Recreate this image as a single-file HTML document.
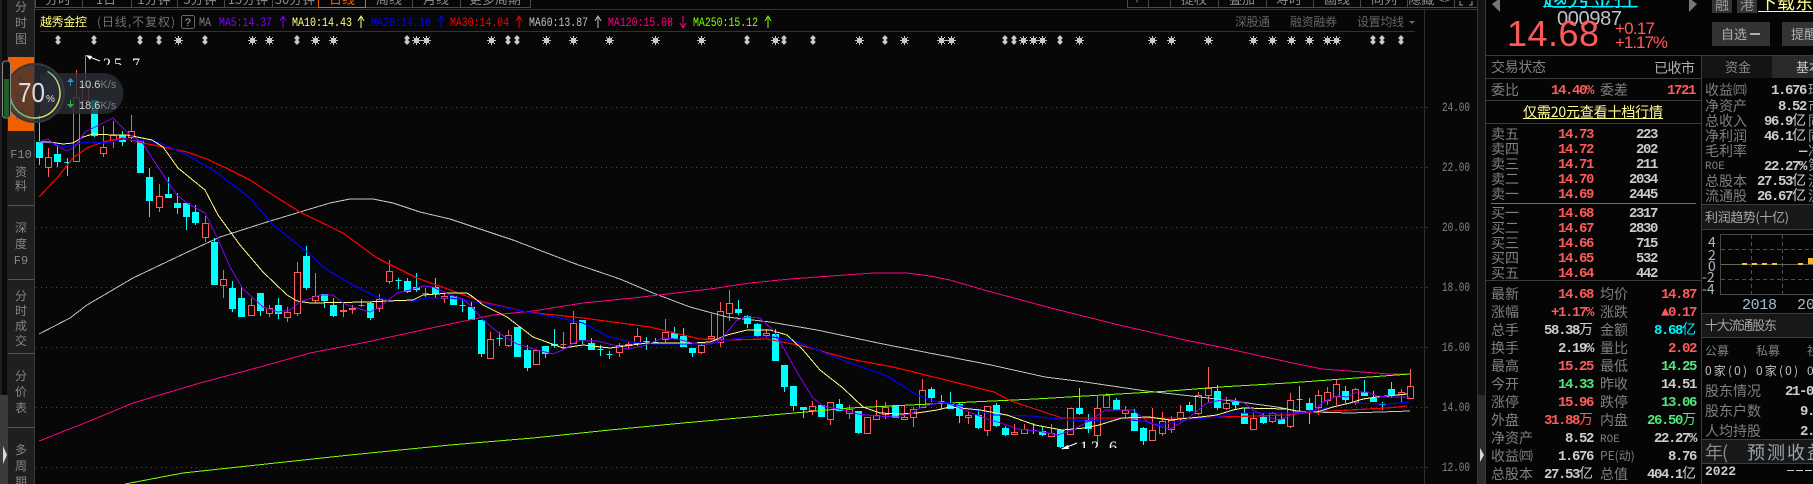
<!DOCTYPE html>
<html><head><meta charset="utf-8"><title>越秀金控</title>
<style>
html,body{margin:0;padding:0;background:#070707;overflow:hidden}
svg{display:block}
text{font-family:"WenQuanYi Zen Hei","Noto Sans CJK SC","Liberation Sans",sans-serif}
.tab{font-size:12px;fill:#858585;text-anchor:middle}
.top{font-size:13px;fill:#8a8a8a;text-anchor:middle}
.ma{font-family:"Liberation Mono",monospace;font-size:13px}
.ax{font-family:"Liberation Mono",monospace;font-size:13px;fill:#858585}
.l{font-size:14px;fill:#808080}
.v{font-family:"Liberation Mono",monospace;font-weight:bold;font-size:14px;letter-spacing:-1.4px;text-anchor:end}
.c{font-family:"WenQuanYi Zen Hei","Noto Sans CJK SC",sans-serif;font-weight:normal;letter-spacing:0}
.r{fill:#ff5a5a}.g{fill:#50e878}.w{fill:#cdcdcd}.cy{fill:#00f0ff}
</style></head>
<body>
<svg width="1813" height="484" viewBox="0 0 1813 484" xmlns="http://www.w3.org/2000/svg">
<defs>
<g id="s" fill="#c8c8c8" shape-rendering="crispEdges"><path d="M-2-2h5v5h-5z"/><path d="M0-4h1v9h-1zM-4 0h9v1h-9zM-3-3h1v1h-1zM3-3h1v1h-1zM-3 3h1v1h-1zM3 3h1v1h-1z"/></g>
<path id="d" fill="#c8c8c8" d="M-.6-4.500h1.200l1.900 2.300v1l-1.200.7v1l1.200.7v1l-1.900 2.300h-1.200l-1.900-2.300v-1l1.200-.7v-1l-1.200-.7v-1z"/>
<linearGradient id="ring" x1="0" y1="0" x2="0" y2="1"><stop offset="0" stop-color="#28c8a8"/><stop offset=".55" stop-color="#70c878"/><stop offset="1" stop-color="#e8e060"/></linearGradient>
</defs>
<rect width="1813" height="484" fill="#070707"/>

<!-- left strip -->
<rect x="0" y="0" width="8" height="484" fill="#1d1d1d"/>
<rect x="2" y="0" width="5" height="395" fill="#0a0a0a"/>
<rect x="0" y="395" width="8" height="89" fill="#3b3b3b"/>
<path d="M3 446l4 9-4 9z" fill="#d8d8d8"/>
<!-- side tabs -->
<rect x="8" y="0" width="26" height="484" fill="#1f1f1f"/>
<rect x="8" y="57" width="26" height="74" fill="#f05f00"/>
<path d="M8 205.500h26M8 279.500h26M8 353.500h26M8 427.500h26" stroke="#555" shape-rendering="crispEdges"/>
<rect x="34" y="0" width="1" height="484" fill="#3c3c3c"/>
<text class="tab" x="21" y="11">分</text><text class="tab" x="21" y="27">时</text><text class="tab" x="21" y="43">图</text>
<text class="tab" x="21" y="84" style="fill:#a05020">K</text><text class="tab" x="21" y="101" style="fill:#a05020">线</text><text class="tab" x="21" y="118" style="fill:#a05020">图</text>
<text class="tab" x="21" y="158" style="font-family:'Liberation Mono',monospace">F10</text><text class="tab" x="21" y="176">资</text><text class="tab" x="21" y="190">料</text>
<text class="tab" x="21" y="232">深</text><text class="tab" x="21" y="248">度</text><text class="tab" x="21" y="264" style="font-family:'Liberation Mono',monospace">F9</text>
<text class="tab" x="21" y="300">分</text><text class="tab" x="21" y="315">时</text><text class="tab" x="21" y="330">成</text><text class="tab" x="21" y="345">交</text>
<text class="tab" x="21" y="380">分</text><text class="tab" x="21" y="396">价</text><text class="tab" x="21" y="412">表</text>
<text class="tab" x="21" y="454">多</text><text class="tab" x="21" y="470">周</text><text class="tab" x="21" y="486">期</text>

<!-- top tabs -->
<g fill="none" stroke="#4a4a4a" shape-rendering="crispEdges">
<path d="M35.500 0V7.500H530.500V0M82.500 0V7M131.500 0V7M177.500 0V7M224.500 0V7M272.500 0V7M412.500 0V7M460.500 0V7"/>
<path d="M1127.500 0V7.500H1477.500V0M1148.500 0V7M1170.500 0V7M1218.500 0V7M1266.500 0V7M1313.500 0V7M1360.500 0V7M1407.500 0V7M1454.500 0V7"/>
<path d="M318.500 0V7.500H365.500V0" stroke="#f06000"/>
</g>
<text class="top" x="58" y="4">分时</text><text class="top" x="106" y="4">1日</text><text class="top" x="154" y="4">1分钟</text><text class="top" x="200" y="4">5分钟</text><text class="top" x="248" y="4">15分钟</text><text class="top" x="295" y="4">30分钟</text><text class="top" x="342" y="4" style="fill:#f06000">日线</text><text class="top" x="389" y="4">周线</text><text class="top" x="436" y="4">月线</text><text class="top" x="495" y="4">更多周期</text>
<text class="top" x="1137" y="4">+</text><text class="top" x="1194" y="4">提权</text><text class="top" x="1242" y="4">叠加</text><text class="top" x="1289" y="4">寿时</text><text class="top" x="1337" y="4">画线</text><text class="top" x="1384" y="4">同列</text><text class="top" x="1430" y="4">隐藏 &lt;&gt;</text>
<path d="M1460 1v4h3M1472 1v4h-3" stroke="#999" fill="none"/>

<!-- header row -->
<path d="M35 9.500H1477M40 31.500H1415" stroke="#333" shape-rendering="crispEdges"/>
<text x="40" y="26" style="font-size:12px;fill:#ffff80" textLength="47">越秀金控</text>
<text x="97" y="26" style="font-size:12px;fill:#707070" textLength="78">(日线,不复权)</text>
<rect x="181.500" y="15.500" width="13" height="13" rx="2" fill="none" stroke="#666"/>
<text x="188" y="26" style="font-size:11px;fill:#aaa;text-anchor:middle;font-family:'Liberation Mono'">?</text>
<text class="ma" x="199" y="26" fill="#808080" textLength="12" lengthAdjust="spacingAndGlyphs">MA</text>
<text class="ma" x="219" y="26" fill="#8000ff" textLength="53" lengthAdjust="spacingAndGlyphs">MA5:14.37</text>
<text class="ma" x="292" y="26" fill="#ffff80" textLength="60" lengthAdjust="spacingAndGlyphs">MA10:14.43</text>
<text class="ma" x="371" y="26" fill="#0000ff" textLength="60" lengthAdjust="spacingAndGlyphs">MA20:14.16</text>
<text class="ma" x="450" y="26" fill="#ff0000" textLength="59" lengthAdjust="spacingAndGlyphs">MA30:14.04</text>
<text class="ma" x="529" y="26" fill="#c0c0c0" textLength="59" lengthAdjust="spacingAndGlyphs">MA60:13.87</text>
<text class="ma" x="608" y="26" fill="#ff0080" textLength="65" lengthAdjust="spacingAndGlyphs">MA120:15.08</text>
<text class="ma" x="693" y="26" fill="#80ff00" textLength="65" lengthAdjust="spacingAndGlyphs">MA250:15.12</text>
<g fill="none" shape-rendering="crispEdges">
<path d="M283 28V16m-3 5l3-5 3 5" stroke="#8000ff"/>
<path d="M361 28V16m-3 5l3-5 3 5" stroke="#ffff80"/>
<path d="M441 28V16m-3 5l3-5 3 5" stroke="#0000ff"/>
<path d="M519 28V16m-3 5l3-5 3 5" stroke="#ff0000"/>
<path d="M598 28V16m-3 5l3-5 3 5" stroke="#c0c0c0"/>
<path d="M683 16V28m-3-5l3 5 3-5" stroke="#ff0080"/>
<path d="M768 28V16m-3 5l3-5 3 5" stroke="#80ff00"/>
</g>
<text x="1235" y="26" style="font-size:12px;fill:#666" textLength="35">深股通</text>
<text x="1290" y="26" style="font-size:12px;fill:#666" textLength="47">融资融券</text>
<text x="1357" y="26" style="font-size:12px;fill:#666" textLength="47">设置均线</text>
<path d="M1409 21h6l-3 3z" fill="#666"/>

<!-- marks row -->
<g>
<use href="#d" x="58" y="40"/><use href="#d" x="94" y="40"/><use href="#d" x="140" y="40"/><use href="#d" x="159" y="40"/><use href="#s" x="178" y="40"/><use href="#d" x="205" y="40"/><use href="#s" x="252" y="40"/><use href="#s" x="269" y="40"/><use href="#d" x="297" y="40"/><use href="#s" x="315" y="40"/><use href="#s" x="333" y="40"/><use href="#d" x="407" y="40"/><use href="#s" x="416" y="40"/><path d="M416 40.500h10" stroke="#c8c8c8"/><use href="#s" x="426" y="40"/>
<use href="#s" x="491" y="40"/><use href="#d" x="508" y="40"/><use href="#d" x="517" y="40"/><use href="#s" x="546" y="40"/><use href="#s" x="573" y="40"/><use href="#s" x="609" y="40"/><use href="#s" x="655" y="40"/><use href="#s" x="701" y="40"/><use href="#d" x="747" y="40"/><use href="#s" x="775" y="40"/><use href="#d" x="784" y="40"/><use href="#d" x="813" y="40"/><use href="#s" x="859" y="40"/><use href="#d" x="885" y="40"/><use href="#s" x="904" y="40"/><use href="#s" x="941" y="40"/><path d="M941 40.500h10" stroke="#c8c8c8"/><use href="#s" x="951" y="40"/>
<use href="#d" x="1005" y="40"/><use href="#d" x="1014" y="40"/><use href="#s" x="1023" y="40"/><use href="#s" x="1033" y="40"/><path d="M1033 40.500h9" stroke="#c8c8c8"/><use href="#s" x="1042" y="40"/><use href="#d" x="1060" y="40"/><use href="#s" x="1079" y="40"/><use href="#s" x="1152" y="40"/><use href="#s" x="1171" y="40"/><use href="#s" x="1208" y="40"/><use href="#s" x="1253" y="40"/><use href="#s" x="1272" y="40"/><use href="#s" x="1291" y="40"/><use href="#s" x="1309" y="40"/><use href="#s" x="1327" y="40"/><path d="M1327 40.500h9" stroke="#c8c8c8"/><use href="#s" x="1336" y="40"/><use href="#d" x="1373" y="40"/><use href="#d" x="1382" y="40"/><use href="#d" x="1401" y="40"/>
</g>

<!-- grid -->
<path d="M36 107.500H1425M36 167.500H1425M36 227.500H1425M36 287.500H1425M36 347.500H1425M36 407.500H1425M36 467.500H1425" stroke="#4a4a4a" stroke-dasharray="1 4" shape-rendering="crispEdges"/>
<path d="M1424.500 10V484M1425 107.500h3M1425 167.500h3M1425 227.500h3M1425 287.500h3M1425 347.500h3M1425 407.500h3M1425 467.500h3" stroke="#2e2e2e" shape-rendering="crispEdges"/>
<text class="ax" x="1442" y="111" textLength="28" lengthAdjust="spacingAndGlyphs">24.00</text>
<text class="ax" x="1442" y="171" textLength="28" lengthAdjust="spacingAndGlyphs">22.00</text>
<text class="ax" x="1442" y="231" textLength="28" lengthAdjust="spacingAndGlyphs">20.00</text>
<text class="ax" x="1442" y="291" textLength="28" lengthAdjust="spacingAndGlyphs">18.00</text>
<text class="ax" x="1442" y="351" textLength="28" lengthAdjust="spacingAndGlyphs">16.00</text>
<text class="ax" x="1442" y="411" textLength="28" lengthAdjust="spacingAndGlyphs">14.00</text>
<text class="ax" x="1442" y="471" textLength="28" lengthAdjust="spacingAndGlyphs">12.00</text>

<!-- candles -->
<g shape-rendering="crispEdges" stroke-width="1">
<path fill="none" stroke="#ff5a5a" d="M48.500 148V177M76.500 70V162M85.500 55V100M103.500 126V157M113.500 121V148M131.500 115V142M159.500 184V212M205.500 216V242M223.500 270V298M251.500 298V316M269.500 305V317M287.500 307V322M297.500 262V316M315.500 273V303M343.500 302V317M352.500 305V314M361.500 299V307M379.500 294V312M389.500 260V284M425.500 288V297M444.500 292V303M490.500 332V358M508.500 330V347M536.500 350V364M563.500 332V348M573.500 311V344M619.500 343V357M628.500 341V349M637.500 328V346M665.500 319V343M701.500 343V354M711.500 314V340M720.500 302V347M729.500 290V321M766.500 329V338M812.500 401V415M830.500 402V425M849.500 405V419M867.500 417V433M876.500 400V420M885.500 402V419M904.500 406V419M913.500 407V427M922.500 379V407M968.500 411V424M987.500 406V436M1014.500 424V434M1024.500 424V434M1051.500 424V436M1070.500 408V435M1097.500 396V443M1106.500 393V407M1125.500 406V418M1152.500 408V440M1162.500 412V436M1171.500 416V433M1180.500 405V421M1198.500 392V415M1208.500 367V402M1226.500 397V410M1253.500 412V429M1272.500 412V423M1290.500 393V428M1318.500 390V415M1327.500 387V405M1336.500 379V405M1355.500 388V405M1401.500 389V403M1410.500 369V399"/>
<path fill="#070707" stroke="#ff5a5a" d="M45.500 157.500h6V167.500h-6zM73.500 97.500h6V161.500h-6zM82.500 85.500h6V100.500h-6zM100.500 147.500h6V153.500h-6zM110.500 135.500h6V140.500h-6zM128.500 131.500h6V137.500h-6zM156.500 196.500h6V207.500h-6zM202.500 223.500h6V237.500h-6zM220.500 279.500h6V285.500h-6zM248.500 305.500h6V315.500h-6zM266.500 308.500h6V313.500h-6zM284.500 312.500h6V317.500h-6zM294.500 272.500h6V313.500h-6zM312.500 296.500h6V300.500h-6zM340.500 310.500h6V311.500h-6zM349.500 308.500h6V309.500h-6zM358.500 305.500h6V305.500h-6zM376.500 299.500h6V308.500h-6zM386.500 271.500h6V281.500h-6zM422.500 293.500h6V293.500h-6zM441.500 296.500h6V298.500h-6zM487.500 339.500h6V358.500h-6zM505.500 335.500h6V345.500h-6zM533.500 350.500h6V364.500h-6zM560.500 344.500h6V344.500h-6zM570.500 323.500h6V343.500h-6zM616.500 345.500h6V352.500h-6zM625.500 344.500h6V345.500h-6zM634.500 336.500h6V343.500h-6zM662.500 332.500h6V339.500h-6zM698.500 345.500h6V352.500h-6zM708.500 336.500h6V338.500h-6zM717.500 311.500h6V342.500h-6zM726.500 303.500h6V313.500h-6zM763.500 333.500h6V335.500h-6zM809.500 406.500h6V410.500h-6zM827.500 402.500h6V419.500h-6zM846.500 409.500h6V413.500h-6zM864.500 417.500h6V433.500h-6zM873.500 415.500h6V419.500h-6zM882.500 407.500h6V414.500h-6zM901.500 417.500h6V419.500h-6zM910.500 409.500h6V417.500h-6zM919.500 390.500h6V407.500h-6zM965.500 415.500h6V417.500h-6zM984.500 406.500h6V430.500h-6zM1011.500 432.500h6V434.500h-6zM1021.500 429.500h6V433.500h-6zM1048.500 433.500h6V436.500h-6zM1067.500 408.500h6V434.500h-6zM1094.500 408.500h6V435.500h-6zM1103.500 395.500h6V407.500h-6zM1122.500 410.500h6V413.500h-6zM1149.500 430.500h6V440.500h-6zM1159.500 421.500h6V433.500h-6zM1168.500 420.500h6V429.500h-6zM1177.500 412.500h6V418.500h-6zM1195.500 395.500h6V413.500h-6zM1205.500 388.500h6V395.500h-6zM1223.500 403.500h6V408.500h-6zM1250.500 418.500h6V429.500h-6zM1269.500 413.500h6V421.500h-6zM1287.500 400.500h6V426.500h-6zM1315.500 395.500h6V407.500h-6zM1324.500 392.500h6V400.500h-6zM1333.500 384.500h6V396.500h-6zM1352.500 389.500h6V402.500h-6zM1398.500 392.500h6V394.500h-6zM1407.500 386.500h6V398.500h-6z"/>
<path fill="#00ffff" stroke="#00ffff" d="M39.500 115V165M36.500 142.500h6V157.500h-6zM57.500 145V167M54.500 154.500h6V161.500h-6zM67.500 158V176M64.500 162.500h6V162.500h-6zM94.500 100V137M91.500 100.500h6V135.500h-6zM122.500 131V146M119.500 135.500h6V141.500h-6zM140.500 140V172M137.500 140.500h6V172.500h-6zM149.500 168V217M146.500 177.500h6V200.500h-6zM168.500 177V197M165.500 194.500h6V197.500h-6zM177.500 193V214M174.500 203.500h6V207.500h-6zM186.500 203V230M183.500 203.500h6V216.500h-6zM195.500 205V225M192.500 212.500h6V222.500h-6zM214.500 238V284M211.500 242.500h6V284.500h-6zM232.500 281V312M229.500 288.500h6V308.500h-6zM241.500 287V317M238.500 298.500h6V316.500h-6zM260.500 293V316M257.500 293.500h6V310.500h-6zM278.500 298V319M275.500 305.500h6V313.500h-6zM306.500 246V290M303.500 256.500h6V287.500h-6zM324.500 294V308M321.500 294.500h6V300.500h-6zM333.500 298V317M330.500 305.500h6V315.500h-6zM370.500 302V320M367.500 303.500h6V317.500h-6zM398.500 278V289M395.500 280.500h6V280.500h-6zM407.500 278V293M404.500 281.500h6V291.500h-6zM416.500 273V292M413.500 287.500h6V289.500h-6zM435.500 278V298M432.500 287.500h6V293.500h-6zM453.500 296V305M450.500 296.500h6V304.500h-6zM462.500 299V312M459.500 305.500h6V305.500h-6zM471.500 302V319M468.500 307.500h6V319.500h-6zM481.500 320V357M478.500 320.500h6V353.500h-6zM499.500 332V346M496.500 338.500h6V338.500h-6zM517.500 327V357M514.500 327.500h6V356.500h-6zM527.500 345V371M524.500 350.500h6V367.500h-6zM545.500 346V358M542.500 346.500h6V353.500h-6zM554.500 329V348M551.500 344.500h6V345.500h-6zM582.500 320V344M579.500 320.500h6V339.500h-6zM591.500 338V350M588.500 343.500h6V349.500h-6zM600.500 345V356M597.500 349.500h6V349.500h-6zM609.500 351V359M606.500 354.500h6V354.500h-6zM646.500 337V350M643.500 341.500h6V341.500h-6zM655.500 338V344M652.500 342.500h6V342.500h-6zM674.500 327V339M671.500 333.500h6V338.500h-6zM683.500 328V346M680.500 336.500h6V346.500h-6zM692.500 348V357M689.500 348.500h6V352.500h-6zM738.500 300V315M735.500 309.500h6V312.500h-6zM747.500 315V328M744.500 316.500h6V323.500h-6zM757.500 323V337M754.500 324.500h6V335.500h-6zM775.500 329V361M772.500 334.500h6V360.500h-6zM784.500 365V392M781.500 365.500h6V386.500h-6zM793.500 386V411M790.500 386.500h6V405.500h-6zM803.500 407V418M800.500 407.500h6V409.500h-6zM821.500 405V417M818.500 405.500h6V416.500h-6zM839.500 399V411M836.500 404.500h6V410.500h-6zM858.500 411V434M855.500 411.500h6V432.500h-6zM895.500 405V418M892.500 405.500h6V417.500h-6zM931.500 387V402M928.500 389.500h6V397.500h-6zM941.500 395V409M938.500 401.500h6V401.500h-6zM950.500 392V408M947.500 403.500h6V408.500h-6zM959.500 403V423M956.500 404.500h6V415.500h-6zM978.500 409V429M975.500 415.500h6V427.500h-6zM996.500 403V427M993.500 405.500h6V425.500h-6zM1005.500 426V436M1002.500 428.500h6V434.500h-6zM1033.500 423V434M1030.500 430.500h6V430.500h-6zM1042.500 426V436M1039.500 431.500h6V434.500h-6zM1060.500 430V448M1057.500 430.500h6V446.500h-6zM1079.500 388V415M1076.500 408.500h6V413.500h-6zM1088.500 414V433M1085.500 420.500h6V428.500h-6zM1116.500 398V409M1113.500 400.500h6V409.500h-6zM1134.500 409V431M1131.500 413.500h6V430.500h-6zM1143.500 427V445M1140.500 428.500h6V440.500h-6zM1189.500 402V412M1186.500 405.500h6V410.500h-6zM1217.500 385V410M1214.500 391.500h6V407.500h-6zM1235.500 398V410M1232.500 402.500h6V404.500h-6zM1244.500 408V423M1241.500 413.500h6V423.500h-6zM1263.500 413V424M1260.500 417.500h6V422.500h-6zM1281.500 413V424M1278.500 419.500h6V423.500h-6zM1299.500 386V413M1296.500 399.500h6V399.500h-6zM1309.500 398V424M1306.500 403.500h6V409.500h-6zM1345.500 386V403M1342.500 391.500h6V399.500h-6zM1364.500 380V396M1361.500 392.500h6V395.500h-6zM1373.500 391V402M1370.500 398.500h6V401.500h-6zM1382.500 402V410M1379.500 404.500h6V404.500h-6zM1391.500 382V398M1388.500 389.500h6V394.500h-6z"/>
</g>

<!-- MA lines -->
<g fill="none" shape-rendering="crispEdges">
<polyline stroke="#c4c4c4" points="39,334 70,318 87,305 133,278 177,257 220,237 267,222 300,212 330,203 350,199 373,199 393,203 420,212 450,219 513,240 573,263 620,279 653,293 690,307 727,317 770,322 817,330 883,344 950,357 991,365 1045,377 1085,382 1146,391 1200,397 1240,402 1277,407 1297,411 1313,412 1350,413 1410,411"/>
<polyline stroke="#ff0080" points="39,441 67,430 97,418 133,403 200,383 260,367 310,353 367,342 450,324 493,315 533,311 583,303 633,298 710,289 750,283 790,279 817,277 845,275 873,273 907,273 930,276 950,280 984,290 1051,308 1119,325 1185,340 1220,347 1288,362 1322,369 1389,374 1410,374"/>
<polyline stroke="#80ff00" points="125,484 183,473 257,465 350,455 450,445 533,438 610,430 683,423 783,414 850,408 950,403 1035,399 1102,395 1170,391 1220,387 1288,383 1356,378 1410,374"/>
<polyline stroke="#ff0000" stroke-width="1.200" points="39,197 57,178 73,158 87,148 103,142 123,138 143,143 163,147 187,152 207,159 230,170 250,180 273,195 300,212 343,233 377,258 417,278 450,290 483,302 527,312 583,318 650,327 700,339 727,340 767,339 803,346 850,359 893,367 950,381 994,392 1011,401 1062,418 1119,418 1187,418 1287,415 1313,412 1350,410 1387,408 1407,406"/>
<polyline stroke="#0000ff" stroke-width="1.200" points="39,142 48,143 67,147 80,143 90,142 107,143 123,139 137,140 160,143 183,153 213,170 250,198 273,225 307,252 327,270 353,285 377,297 393,301 413,301 427,298 450,298 483,303 527,312 560,318 583,323 607,336 630,342 657,344 710,344 727,340 747,337 773,337 797,342 817,350 850,363 887,376 917,395 937,402 950,403 994,415 1031,416 1058,419 1085,421 1119,419 1143,421 1160,425 1187,420 1217,417 1234,413 1263,413 1300,413 1327,408 1350,403 1387,404 1410,402"/>
<polyline stroke="#ffff80" points="39,142 50,142 63,144 73,143 83,137 93,134 113,135 127,135 137,137 152,140 163,147 178,168 205,190 218,215 240,245 263,272 287,295 297,301 310,303 367,302 387,301 413,300 423,295 450,293 467,293 473,297 483,305 507,317 533,337 563,348 583,345 610,348 647,343 693,343 710,342 727,335 747,330 770,330 787,335 803,350 820,370 843,388 863,407 880,413 900,414 917,413 937,410 950,407 980,410 1007,415 1035,425 1062,430 1085,428 1099,425 1122,418 1149,417 1170,420 1200,417 1217,415 1233,410 1243,408 1287,409 1300,412 1317,412 1333,407 1350,403 1363,399 1377,397 1407,394"/>
<polyline stroke="#8000ff" points="39,142 48,139 57,146 67,151 75,147 85,132 95,127 113,118 130,135 142,142 152,158 168,182 177,195 187,203 205,213 217,237 230,267 243,289 263,307 278,312 290,310 300,302 320,295 333,295 343,303 353,307 370,312 380,307 397,293 410,290 423,286 433,287 450,295 463,299 473,308 483,320 500,334 517,344 530,348 553,354 563,350 577,341 597,341 613,345 627,349 643,346 663,338 677,339 693,343 710,344 723,337 737,320 747,317 760,318 773,330 783,347 793,365 803,382 813,398 823,406 843,410 858,414 877,416 897,417 913,413 923,406 940,403 950,404 967,411 987,419 1001,423 1018,429 1038,431 1058,435 1075,429 1092,419 1105,410 1133,410 1149,423 1170,429 1187,419 1207,403 1227,399 1243,402 1253,410 1267,417 1280,420 1297,412 1313,412 1323,402 1337,396 1347,397 1357,392 1367,392 1377,396 1390,397 1410,397"/>
</g>

<!-- max / min markers -->
<path d="M87 56l13 5" stroke="#fff" fill="none"/><path d="M86 55l6 1-2 4z" fill="#fff"/>
<text x="103" y="69" style="font:16px 'Liberation Serif',serif;fill:#fff;letter-spacing:3px">25.7</text>
<rect x="100" y="65" width="42" height="9" fill="#070707"/>
<path d="M1062 449l15-6" stroke="#fff" fill="none"/><path d="M1061 449l7-4 1 4z" fill="#fff"/>
<text x="1080" y="452" style="font:16px 'Liberation Serif',serif;fill:#fff;letter-spacing:3px">12.6</text>
<rect x="1078" y="448" width="42" height="10" fill="#070707"/>

<!-- speed overlay -->
<path d="M40 73H103a20.500 20.500 0 0 1 0 41H40z" fill="#2a2e35" fill-opacity=".82"/>
<circle cx="35" cy="93" r="29" fill="#2b2e36" fill-opacity=".72" stroke="#33373e" stroke-width="2"/>
<circle cx="35" cy="93" r="25" fill="none" stroke="url(#ring)" stroke-width="1.500" stroke-dasharray="110 60" transform="rotate(-60 35 93)"/>
<text x="18" y="102" style="font:28px 'Liberation Sans',sans-serif;fill:#dcdcdc" textLength="27" lengthAdjust="spacingAndGlyphs">70</text>
<text x="46" y="102" style="font:10px 'Liberation Sans',sans-serif;fill:#e0e0e0">%</text>
<path d="M70 86v-4h-3l3.500-4 3.500 4h-3v4z" fill="#3090d8"/>
<path d="M70 100v4h-3l3.500 4 3.500-4h-3v-4z" fill="#28b048"/>
<text x="79" y="88" style="font:11px 'Liberation Sans',sans-serif;fill:#d0d0d0">10.6<tspan fill="#7a7a80">K/s</tspan></text>
<text x="79" y="109" style="font:11px 'Liberation Sans',sans-serif;fill:#d0d0d0">18.6<tspan fill="#7a7a80">K/s</tspan></text>
<rect x="2.500" y="61" width="8" height="57" rx="3" fill="#101010" stroke="#8a8a8a"/>
<path d="M4 80h5M4 82h5M4 84h5M4 86h5M4 88h5M4 90h5M4 92h5M4 94h5M4 96h5M4 98h5M4 100h5M4 102h5M4 104h5M4 106h5M4 108h5M4 110h5M4 112h5M4 114h5M4 116h5" stroke="#38a848" shape-rendering="crispEdges"/>

<!-- right scroll strip -->
<rect x="1477" y="0" width="9" height="484" fill="#141414"/>
<rect x="1477" y="395" width="9" height="89" fill="#2b2b2b"/>
<rect x="1477" y="0" width="1" height="484" fill="#333"/>
<rect x="1485" y="0" width="1" height="484" fill="#3a3a3a"/>
<path d="M1480 448l4 7-4 7z" fill="#d8d8d8"/>

<!-- right panel -->
<rect x="1486" y="0" width="327" height="484" fill="#050505"/>
<path d="M1492 4l8-6v14z" fill="#777"/><path d="M1697 4l-8-6v14z" fill="#777"/>
<text x="1543" y="6" style="font-size:24px;fill:#00f0ff" textLength="95">越秀金控</text>
<rect x="1543" y="6" width="95" height="1" fill="#00f0ff"/>
<text x="1557" y="25" style="font:20px 'Liberation Sans',sans-serif;fill:#bcc4c8" textLength="65">000987</text>
<text x="1507" y="46" style="font:36px 'Liberation Sans',sans-serif;fill:#ff5a5a" textLength="92">14.68</text>
<text x="1615" y="34" style="font:17px 'Liberation Sans',sans-serif;fill:#ff5a5a" textLength="40">+0.17</text>
<text x="1615" y="48" style="font:17px 'Liberation Sans',sans-serif;fill:#ff5a5a" textLength="53">+1.17%</text>
<rect x="1712" y="0" width="20" height="13" fill="#333"/><rect x="1737" y="0" width="20" height="13" fill="#333"/>
<text x="1722" y="10" style="font-size:14px;fill:#9a9a9a;text-anchor:middle">融</text><text x="1747" y="10" style="font-size:14px;fill:#9a9a9a;text-anchor:middle">港</text>
<text x="1759" y="9" style="font-size:18px;fill:#ffff90">下载东方</text><rect x="1758" y="11" width="55" height="1" fill="#ffff90"/>
<rect x="1712" y="22" width="58" height="24" fill="#333"/><rect x="1782" y="22" width="31" height="24" fill="#333"/>
<text x="1721" y="39" style="font-size:13px;fill:#b0b0b0">自选</text><rect x="1750" y="33" width="10" height="2" fill="#b0b0b0"/>
<text x="1791" y="39" style="font-size:13px;fill:#b0b0b0">提醒</text>

<rect x="1702" y="56" width="70" height="22" fill="#141414"/><rect x="1772" y="56" width="41" height="22" fill="#2a2a2a"/>
<path d="M1486 55.500H1813M1486 78.500H1701M1486 100.500H1701M1486 123.500H1701M1491 203.500H1696M1486 280.500H1701M1702 204.500H1813M1702 229.500H1813M1702 313.500H1813M1702 337.500H1813M1702 439.500H1813M1702 463.500H1813" stroke="#3c3c3c" shape-rendering="crispEdges"/>
<rect x="1491" y="203" width="205" height="1" fill="#707070"/>
<rect x="1701" y="55" width="1" height="429" fill="#3c3c3c"/>
<text x="1725" y="72" style="font-size:13px;fill:#8a8a8a">资金</text><text x="1796" y="72" style="font-size:13px;fill:#c8c8c8">基本</text>

<text class="l" x="1491" y="72" textLength="55">交易状态</text><text x="1654" y="73" style="font-size:14px;fill:#b0b0b0" textLength="41">已收市</text>
<text class="l" x="1491" y="95">委比</text><text class="v r" x="1593" y="94">14.40%</text><text class="l" x="1600" y="95">委差</text><text class="v r" x="1695" y="94">1721</text>
<text x="1523" y="117" style="font-size:14px;fill:#ffff90" textLength="140">仅需20元查看十档行情</text><rect x="1523" y="118" width="140" height="1" fill="#ffff90"/>

<g>
<text class="l" x="1491" y="139">卖五</text><text class="v r" x="1593" y="138">14.73</text><text class="v w" x="1657" y="138">223</text>
<text class="l" x="1491" y="154">卖四</text><text class="v r" x="1593" y="153">14.72</text><text class="v w" x="1657" y="153">202</text>
<text class="l" x="1491" y="169">卖三</text><text class="v r" x="1593" y="168">14.71</text><text class="v w" x="1657" y="168">211</text>
<text class="l" x="1491" y="184">卖二</text><text class="v r" x="1593" y="183">14.70</text><text class="v w" x="1657" y="183">2034</text>
<text class="l" x="1491" y="199">卖一</text><text class="v r" x="1593" y="198">14.69</text><text class="v w" x="1657" y="198">2445</text>
<text class="l" x="1491" y="218">买一</text><text class="v r" x="1593" y="217">14.68</text><text class="v w" x="1657" y="217">2317</text>
<text class="l" x="1491" y="233">买二</text><text class="v r" x="1593" y="232">14.67</text><text class="v w" x="1657" y="232">2830</text>
<text class="l" x="1491" y="248">买三</text><text class="v r" x="1593" y="247">14.66</text><text class="v w" x="1657" y="247">715</text>
<text class="l" x="1491" y="263">买四</text><text class="v r" x="1593" y="262">14.65</text><text class="v w" x="1657" y="262">532</text>
<text class="l" x="1491" y="278">买五</text><text class="v r" x="1593" y="277">14.64</text><text class="v w" x="1657" y="277">442</text>

<text class="l" x="1491" y="299">最新</text><text class="v r" x="1593" y="298">14.68</text><text class="l" x="1600" y="299">均价</text><text class="v r" x="1696" y="298">14.87</text>
<text class="l" x="1491" y="317">涨幅</text><text class="v r" x="1593" y="316">+1.17%</text><text class="l" x="1600" y="317">涨跌</text><text class="v r" x="1696" y="316">▲0.17</text>
<text class="l" x="1491" y="335">总手</text><text class="v w" x="1593" y="334">58.38<tspan class="c">万</tspan></text><text class="l" x="1600" y="335">金额</text><text class="v cy" x="1696" y="334">8.68<tspan class="c">亿</tspan></text>
<text class="l" x="1491" y="353">换手</text><text class="v w" x="1593" y="352">2.19%</text><text class="l" x="1600" y="353">量比</text><text class="v r" x="1696" y="352">2.02</text>
<text class="l" x="1491" y="371">最高</text><text class="v r" x="1593" y="370">15.25</text><text class="l" x="1600" y="371">最低</text><text class="v g" x="1696" y="370">14.25</text>
<text class="l" x="1491" y="389">今开</text><text class="v g" x="1593" y="388">14.33</text><text class="l" x="1600" y="389">昨收</text><text class="v w" x="1696" y="388">14.51</text>
<text class="l" x="1491" y="407">涨停</text><text class="v r" x="1593" y="406">15.96</text><text class="l" x="1600" y="407">跌停</text><text class="v g" x="1696" y="406">13.06</text>
<text class="l" x="1491" y="425">外盘</text><text class="v r" x="1593" y="424">31.88<tspan class="c">万</tspan></text><text class="l" x="1600" y="425">内盘</text><text class="v g" x="1696" y="424">26.50<tspan class="c">万</tspan></text>
<text class="l" x="1491" y="443">净资产</text><text class="v w" x="1593" y="442">8.52</text><text x="1600" y="442" style="font:11px 'Liberation Mono',monospace;fill:#808080">ROE</text><text class="v w" x="1696" y="442">22.27%</text>
<text class="l" x="1491" y="461">收益㈣</text><text class="v w" x="1593" y="460">1.676</text><text x="1600" y="460" style="font-size:12px;fill:#808080">PE(动)</text><text class="v w" x="1696" y="460">8.76</text>
<text class="l" x="1491" y="479">总股本</text><text class="v w" x="1593" y="478">27.53<tspan class="c">亿</tspan></text><text class="l" x="1600" y="479">总值</text><text class="v w" x="1696" y="478">404.1<tspan class="c">亿</tspan></text>
</g>

<!-- right column -->
<text class="l" x="1705" y="95">收益㈣</text><text class="v w" x="1806" y="94">1.676</text>
<text class="l" x="1705" y="111">净资产</text><text class="v w" x="1806" y="110">8.52</text>
<text class="l" x="1705" y="126">总收入</text><text class="v w" x="1806" y="125">96.9<tspan class="c">亿</tspan></text>
<text class="l" x="1705" y="141">净利润</text><text class="v w" x="1806" y="140">46.1<tspan class="c">亿</tspan></text>
<text class="l" x="1705" y="156">毛利率</text><text class="v w" x="1806" y="155">—</text>
<text x="1705" y="169" style="font:11px 'Liberation Mono',monospace;fill:#808080">ROE</text><text class="v w" x="1806" y="170">22.27%</text>
<text class="l" x="1705" y="186">总股本</text><text class="v w" x="1806" y="185">27.53<tspan class="c">亿</tspan></text>
<text class="l" x="1705" y="201">流通股</text><text class="v w" x="1806" y="200">26.67<tspan class="c">亿</tspan></text>
<g style="font-size:14px;fill:#9a9a9a"><text x="1808" y="95">环</text><text x="1808" y="111">市</text><text x="1808" y="126">同</text><text x="1808" y="141">同</text><text x="1808" y="156">净</text><text x="1808" y="170">第</text><text x="1808" y="186">流</text><text x="1808" y="201">流</text></g>

<rect x="1702" y="205" width="111" height="24" fill="#181818"/>
<text x="1705" y="222" style="font-size:13px;fill:#a8a8a8" textLength="84">利润趋势(十亿)</text>
<g fill="none" stroke="#505050" shape-rendering="crispEdges">
<path d="M1720.500 234.500H1813M1720.500 234V294.500H1813" stroke="#484848"/>
<path d="M1721 249.500H1813M1721 279.500H1813M1751.500 235V294M1782.500 235V294" stroke-dasharray="4 3"/>
<path d="M1721 264.500H1813" stroke="#666"/>
</g>
<path d="M1742 263h5v2h-5zM1752 263h5v2h-5zM1762 263h5v2h-5zM1772 263h5v2h-5zM1798 263h5v2h-5z" fill="#ffc040"/>
<rect x="1808" y="258" width="5" height="6" fill="#ffb020"/>
<g style="font:14px 'Liberation Mono',monospace;fill:#a8bccc"><text x="1708" y="247">4</text><text x="1708" y="260">2</text><text x="1708" y="271">0</text><text x="1702" y="282">-2</text><text x="1702" y="294">-4</text></g>
<text x="1742" y="309" style="font:15px 'Liberation Mono',monospace;fill:#a8bccc" textLength="35">2018</text><text x="1797" y="309" style="font:15px 'Liberation Mono',monospace;fill:#a8bccc">20</text>

<rect x="1702" y="314" width="111" height="23" fill="#181818"/>
<text x="1705" y="330" style="font-size:13px;fill:#a8a8a8" textLength="72">十大流通股东</text>
<text class="l" x="1705" y="355" style="font-size:12px">公募</text><text class="l" x="1756" y="355" style="font-size:12px">私募</text><text class="l" x="1807" y="355" style="font-size:12px">社</text>
<text x="1705" y="375" style="font-size:12px;fill:#c0c0c0" textLength="42">0家(0)</text><text x="1756" y="375" style="font-size:12px;fill:#c0c0c0" textLength="42">0家(0)</text><text x="1807" y="375" style="font-size:12px;fill:#c0c0c0">0</text>
<text class="l" x="1705" y="396">股东情况</text><text class="v w" x="1813" y="395" style="text-anchor:start" dx="-28">21-0</text>
<text class="l" x="1705" y="416">股东户数</text><text class="v w" x="1800" y="415" style="text-anchor:start">9.</text>
<text class="l" x="1705" y="436">人均持股</text><text class="v w" x="1800" y="435" style="text-anchor:start">2.</text>
<rect x="1702" y="440" width="111" height="23" fill="#181818"/>
<text x="1705" y="459" style="font-size:18px;fill:#8a8a8a">年</text><text x="1722" y="459" style="font-size:18px;fill:#8a8a8a">(</text>
<text x="1747" y="459" style="font-size:18px;fill:#9aa4ac" letter-spacing="2">预测收益</text>
<text x="1705" y="475" style="font:bold 13px 'Liberation Mono',monospace;fill:#cdcdcd" textLength="31">2022</text>
<path d="M1787 470.500h30" stroke="#cdcdcd" stroke-dasharray="7 2"/>
</svg>
</body></html>
